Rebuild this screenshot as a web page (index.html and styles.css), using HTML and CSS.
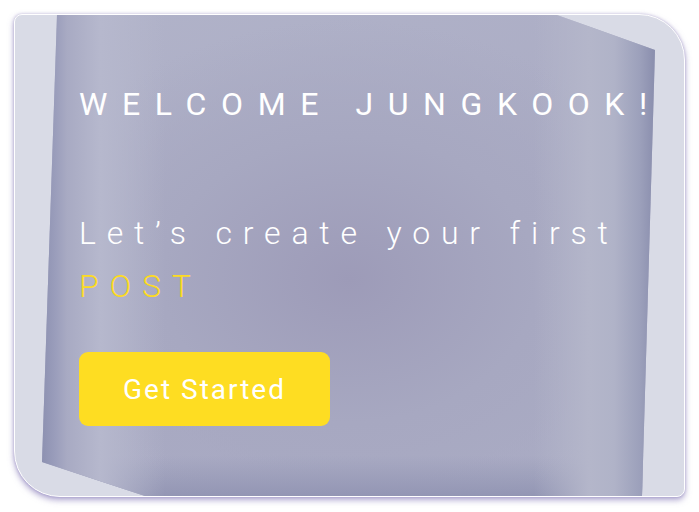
FILE: index.html
```html
<!DOCTYPE html>
<html lang="en">
<head>
<meta charset="utf-8">
<title>Welcome</title>
<link rel="stylesheet" href="styles.css">
</head>
<body>
<div class="card">
  <div class="panel"></div>
  <div class="content">
    <h1 class="title">WELCOME JUNGKOOK!</h1>
    <p class="lead">Let’s create your first <span class="accent">POST</span></p>
    <button class="cta" type="button">Get Started</button>
  </div>
</div>
</body>
</html>
```
FILE: styles.css
```css
html, body {
  margin: 0;
  padding: 0;
  background: #ffffff;
}
body {
  width: 699px;
  height: 512px;
  overflow: hidden;
  font-family: Roboto, "Liberation Sans", sans-serif;
}
.card {
  position: relative;
  box-sizing: border-box;
  margin: 14px 0 0 14px;
  width: 671px;
  height: 483px;
  background: #d9dbe6;
  border: 1px solid #ffffff;
  border-radius: 8px 46px 8px 46px;
  box-shadow: 0 3px 6px rgba(110, 95, 170, 0.55), 0 0 3px rgba(110, 95, 170, 0.35);
  overflow: hidden;
}
.panel {
  position: absolute;
  inset: 0;
  clip-path: polygon(42px 0, 542px 0, 640px 35px, 627px 481px, 130px 481px, 27px 447px);
  background:
    linear-gradient(to right, #8d91b1 27px, #9a9dbb 40px, #a8aac3 52px, #b6b8cd 85px, rgba(174,176,198,0) 150px),
    linear-gradient(to left, #8c90af 31px, #9ca0bb 44px, #b0b3c8 70px, #b4b6ca 95px, rgba(174,176,198,0) 150px),
    linear-gradient(to top, #9396b4 0, rgba(174,176,198,0) 40px),
    radial-gradient(ellipse 340px 260px at 50% 55%, #9d9bb8 0%, #a7a8c1 55%, rgba(171,172,196,0) 100%),
    linear-gradient(160deg, #b1b3c9 0%, #a9aac3 60%, #abadc5 100%);
}
.content {
  position: relative;
  display: flex;
  flex-direction: column;
  align-items: flex-start;
  padding: 73px 0 0 64px;
}
.title {
  margin: 0;
  font-size: 32px;
  line-height: 32px;
  font-weight: 400;
  letter-spacing: 14.6px;
  color: #ffffff;
  white-space: nowrap;
}
.lead {
  margin: 87px 0 0 0;
  font-size: 32px;
  line-height: 53px;
  font-weight: 300;
  letter-spacing: 10.8px;
  color: #ffffff;
  width: 580px;
}
.accent {
  color: #fddb22;
}
.cta {
  margin-top: 39px;
  width: 251px;
  height: 74px;
  border: none;
  border-radius: 9px;
  background: #fedd22;
  color: #ffffff;
  font-family: Roboto, "Liberation Sans", sans-serif;
  font-size: 28px;
  font-weight: 400;
  letter-spacing: 2px;
  padding: 0;
}
```
